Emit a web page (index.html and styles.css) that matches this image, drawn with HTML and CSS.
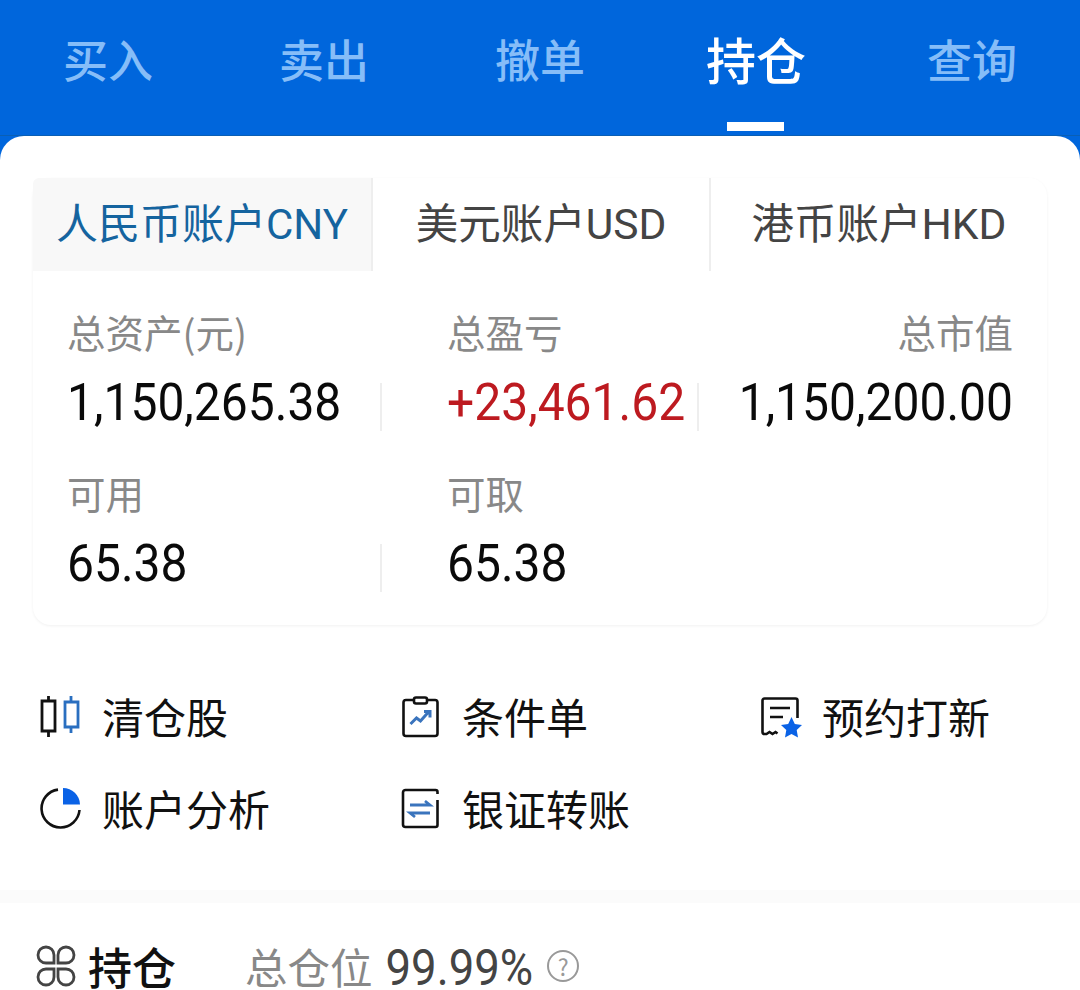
FILE: index.html
```html
<!DOCTYPE html>
<html lang="zh-CN">
<head>
<meta charset="utf-8">
<title>持仓</title>
<link rel="stylesheet" href="styles.css">
</head>
<body>
<div class="page">
  <nav class="topnav">
    <a class="topnav-item">买入</a>
    <a class="topnav-item">卖出</a>
    <a class="topnav-item">撤单</a>
    <a class="topnav-item active">持仓</a>
    <a class="topnav-item">查询</a>
  </nav>
  <main class="sheet">
    <section class="card">
      <div class="currency-tabs">
        <div class="currency-tab active">人民币账户CNY</div>
        <div class="currency-tab">美元账户USD</div>
        <div class="currency-tab">港币账户HKD</div>
      </div>
      <div class="stats">
        <div class="stat">
          <div class="stat-label">总资产(元)</div>
          <div class="stat-value">1,150,265.38</div>
        </div>
        <div class="stat">
          <div class="stat-label">总盈亏</div>
          <div class="stat-value up">+23,461.62</div>
        </div>
        <div class="stat right">
          <div class="stat-label">总市值</div>
          <div class="stat-value">1,150,200.00</div>
        </div>
        <div class="stat">
          <div class="stat-label">可用</div>
          <div class="stat-value">65.38</div>
        </div>
        <div class="stat last">
          <div class="stat-label">可取</div>
          <div class="stat-value">65.38</div>
        </div>
      </div>
    </section>

    <section class="actions">
      <div class="action">
        <svg class="icon" viewBox="0 0 42 42" fill="none" stroke-width="2.8">
          <path stroke="#111" d="M8.500 0v5M8.500 35v6M2 5h13v30H2z"/>
          <path stroke="#2a6fc0" d="M31 0v6M31 31v6M25 6h13v25H25z"/>
        </svg>
        <span>清仓股</span>
      </div>
      <div class="action">
        <svg class="icon" viewBox="0 0 42 42" fill="none" stroke-width="2.6">
          <path stroke="#111" d="M13 4H6a2.500 2.500 0 0 0-2.500 2.500v31A2.500 2.500 0 0 0 6 40h29a2.500 2.500 0 0 0 2.500-2.500v-31A2.500 2.500 0 0 0 35 4h-7"/>
          <rect stroke="#111" x="14" y="1.500" width="13" height="6" rx="2"/>
          <path stroke="#3a74bd" stroke-width="3" d="M10.500 28l6-6 4 3 8-9M24 15.500h6v6"/>
        </svg>
        <span>条件单</span>
      </div>
      <div class="action">
        <svg class="icon" viewBox="0 0 42 42" fill="none" stroke-width="2.6">
          <path stroke="#111" d="M37.500 22V4.500a2 2 0 0 0-2-2h-31a2 2 0 0 0-2 2V36a2 2 0 0 0 2 2h2l3-2 3 2 3-2 2 1.500"/>
          <path stroke="#111" d="M10 12h20M10 21h13"/>
          <path fill="#0a62e6" d="M31.500 21l3.300 6.900 7.200 1-5.300 5.100 1.300 7.500-6.500-3.500-6.500 3.500 1.300-7.500-5.300-5.100 7.200-1z"/>
        </svg>
        <span>预约打新</span>
      </div>
      <div class="action">
        <svg class="icon" viewBox="0 0 42 42" fill="none" stroke-width="2.6">
          <path stroke="#111" d="M18 1.600A19 19 0 1 0 39.500 22"/>
          <path fill="#0a62e6" d="M23 0a17 17 0 0 1 17 16.500H23z"/>
        </svg>
        <span>账户分析</span>
      </div>
      <div class="action">
        <svg class="icon" viewBox="0 0 42 42" fill="none" stroke-width="2.6">
          <path stroke="#111" d="M37.500 6V4a2 2 0 0 0-2-2h-30a2.500 2.500 0 0 0-2.500 2.500v32A2.500 2.500 0 0 0 5.500 39h30a2 2 0 0 0 2-2V12"/>
          <path stroke="#3a74bd" stroke-width="2.800" d="M10 17h20l-5-4M30 25H10l5 4"/>
        </svg>
        <span>银证转账</span>
      </div>
    </section>

    <div class="band"></div>

    <section class="holdings">
      <svg class="grid-icon" viewBox="0 0 40 42" fill="none" stroke="#444" stroke-width="2.800">
        <path d="M18 18h-8a8 8 0 1 1 8-8zM22 18h8a8 8 0 1 0-8-8zM18 24h-8a8 8 0 1 0 8 8zM22 24h8a8 8 0 1 1-8 8z"/>
      </svg>
      <h2 class="holdings-title">持仓</h2>
      <div class="position">
        <span class="position-label">总仓位</span>
        <span class="position-value">99.99%</span>
        <span class="help">?</span>
      </div>
    </section>
  </main>
</div>
</body>
</html>
```
FILE: styles.css
```css
* { box-sizing: border-box; }
html, body {
  margin: 0;
  height: 990px;
  overflow: hidden;
  background: #0066dc;
}
body {
  font-family: "Roboto", "Noto Sans CJK SC", sans-serif;
  color: #111;
}
.page {
  width: 1080px;
  height: 990px;
  display: flex;
  flex-direction: column;
}
.topnav {
  height: 136px;
  display: grid;
  grid-template-columns: repeat(5, 1fr);
  background: #0066dc;
  border-bottom: 1px solid #0a5fb4;
}
.topnav-item {
  position: relative;
  text-align: center;
  font-family: "Noto Sans CJK SC", sans-serif;
  font-size: 45px;
  line-height: 64px;
  padding-top: 27px;
  font-weight: 500;
  color: #86bdf8;
}
.topnav-item.active {
  font-size: 50px;
  padding-top: 26px;
  color: #fff;
}
.topnav-item.active::after {
  content: "";
  position: absolute;
  left: 50%;
  top: 122px;
  width: 57px;
  height: 9px;
  margin-left: -29px;
  background: #fff;
}
.sheet {
  flex: 1;
  background: #fff;
  border-radius: 24px 24px 0 0;
  padding-top: 42px;
  overflow: hidden;
}
.card {
  width: 1014px;
  height: 447px;
  margin-left: 33px;
  border-radius: 18px;
  background: #fff;
  box-shadow: 0 1px 3px rgba(0, 0, 0, .06);
}
.currency-tabs {
  display: grid;
  grid-template-columns: 338px 338px 1fr;
  height: 93px;
}
.currency-tab {
  display: flex;
  align-items: center;
  justify-content: center;
  padding-bottom: 8px;
  font-size: 42.500px;
  color: #444;
  border-left: 2px solid #eee;
}
.currency-tab:first-child { border-left: 0; }
.currency-tab.active {
  background: #f8f8f8;
  font-size: 42px;
  color: #15649f;
  border-top-left-radius: 6px;
}
.stats {
  display: grid;
  grid-template-columns: 349px 317px 1fr;
  grid-auto-rows: 161px;
  padding-top: 37px;
}
.stat {
  position: relative;
  padding-left: 34px;
}
.stat:nth-child(2), .stat:nth-child(5) { padding-left: 65px; }
.stat.right {
  text-align: right;
  padding: 0 34px 0 0;
}
.stat::after {
  content: "";
  position: absolute;
  right: 0;
  top: 75px;
  width: 2px;
  height: 48px;
  background: #eee;
}
.stat.right::after, .stat.last::after { display: none; }
.stat-label {
  font-family: "Noto Sans CJK SC", sans-serif;
  font-size: 38.500px;
  line-height: 46px;
  color: #888;
}
.stat-value {
  font-size: 48px;
  line-height: 60px;
  margin-top: 19px;
  color: #0a0a0a;
  white-space: nowrap;
  transform: scaleY(1.08);
}
.stat-value.up { color: #bd1a20; }
.actions {
  display: grid;
  grid-template-columns: repeat(3, 360px);
  grid-auto-rows: 92px;
  margin-top: 46px;
}
.action {
  display: flex;
  align-items: center;
  gap: 20px;
  padding-left: 40px;
  font-family: "Noto Sans CJK SC", sans-serif;
  font-size: 42px;
  color: #111;
}
.action span { padding-bottom: 4px; }
.icon { width: 42px; height: 42px; flex: none; }
.band {
  height: 13px;
  margin-top: 35px;
  background: #fbfbfb;
}
.holdings {
  display: flex;
  align-items: center;
  padding: 41px 0 0 36px;
  font-family: "Noto Sans CJK SC", sans-serif;
}
.grid-icon { width: 40px; height: 42px; flex: none; }
.holdings-title {
  margin: 0 0 0 12px;
  font-size: 44px;
  line-height: 44px;
  font-weight: 500;
  color: #111;
}
.position {
  display: flex;
  align-items: center;
  margin-left: 69px;
  font-size: 42.500px;
  line-height: 44px;
}
.position-label { color: #888; }
.position-value {
  margin-left: 13px;
  font-family: "Roboto", sans-serif;
  font-size: 45.500px;
  color: #444;
  transform: translateY(3px) scaleY(1.08);
}
.help {
  width: 32px;
  height: 32px;
  margin-left: 14px;
  border: 2px solid #999;
  border-radius: 50%;
  display: flex;
  align-items: center;
  justify-content: center;
  font-size: 23px;
  line-height: 1;
  color: #999;
}
```
